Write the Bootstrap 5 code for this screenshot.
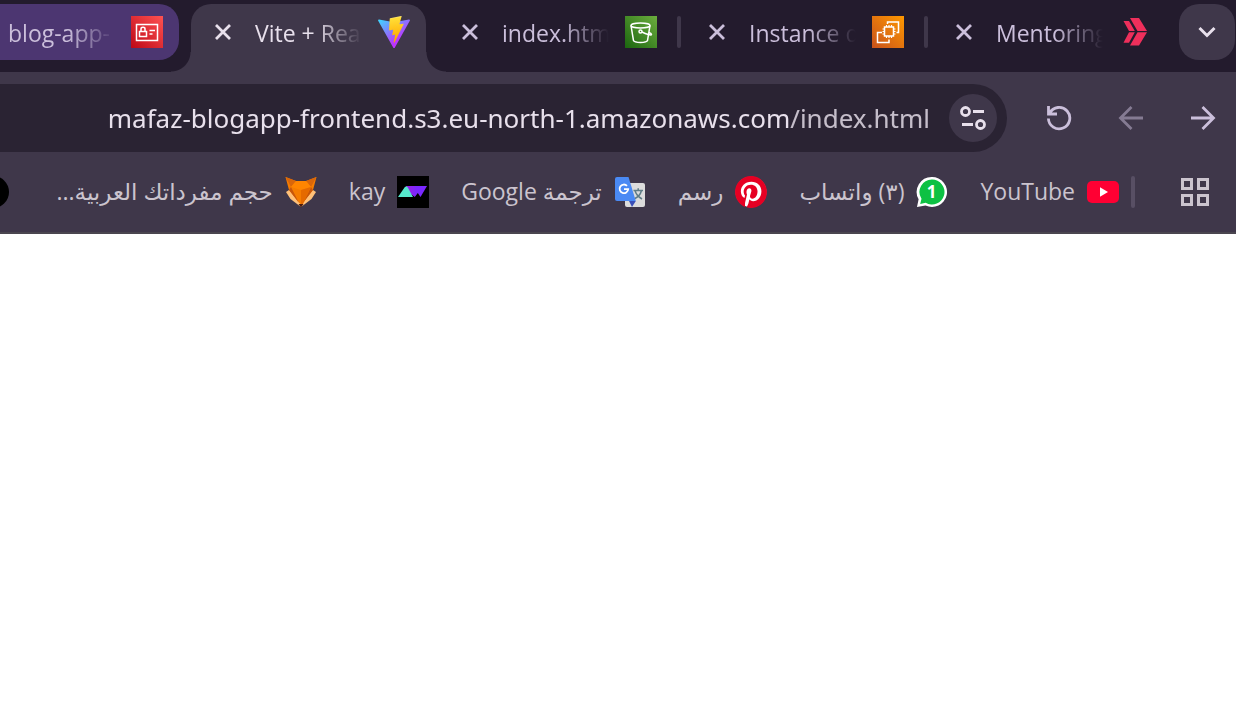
<!DOCTYPE html>
<html lang="ar" dir="rtl">
<head>
<meta charset="utf-8">
<meta name="viewport" content="width=device-width, initial-scale=1">
<title>Vite + React</title>
<link href="https://cdn.jsdelivr.net/npm/bootstrap@5.3.0/dist/css/bootstrap.min.css" rel="stylesheet">
<style>
  :root {
    --strip: #231b2d;
    --toolbar: #3f374a;
    --field: #2a2333;
    --group: #4c3671;
    --lilac: #cbbfdb;
    --light: #e8e0ec;
    --muted: #cbc4ce;
  }
  body { font-family: "Open Sans", "Noto Sans", "DejaVu Sans", sans-serif; background: #fff; }
  svg { display: block; flex: none; }
  .browser { background: var(--toolbar); border-bottom: 2px solid #4a464f; }
  .icon-btn { width: 56px; height: 56px; flex: none; color: var(--lilac); border: 0; background: none; padding: 0; }

  /* tab strip */
  .strip { background: var(--strip); height: 72px; padding: 4px 1px 0; gap: 4px; }
  .menu-btn { background: var(--toolbar); border-radius: 20px; color: var(--light); margin-left: 8px; }
  .tab { position: relative; width: 235px; height: 56px; flex: none; padding: 0 16px; gap: 16px; }
  .tab-title { flex: 1 1 0; min-width: 0; overflow: hidden; white-space: nowrap; direction: ltr; text-align: left;
    font-size: 23px; line-height: 32px; padding-top: 2px; color: var(--lilac); text-decoration: none;
    -webkit-mask-image: linear-gradient(to right, #000 calc(100% - 48px), transparent);
    mask-image: linear-gradient(to right, #000 calc(100% - 48px), transparent); }
  .close-btn { width: 32px; height: 32px; flex: none; border: 0; background: none; padding: 0; color: var(--lilac); }
  .tab-divider { width: 4px; height: 32px; margin-top: 12px; border-radius: 2px; background: var(--toolbar); flex: none; }
  .tab-divider.off { background: none; }
  .tab-grouped { background: var(--group); border-radius: 20px; }
  .tab-active { height: 68px; padding-bottom: 12px; background: var(--toolbar); border-radius: 20px 20px 0 0; }
  .tab-active .tab-title, .tab-active .close-btn { color: var(--light); }
  .tab-active::before, .tab-active::after { content: ""; position: absolute; bottom: 0; width: 20px; height: 20px; }
  .tab-active::before { right: -20px; background: radial-gradient(circle at 100% 0, transparent 19px, var(--toolbar) 20px); }
  .tab-active::after { left: -20px; background: radial-gradient(circle at 0 0, transparent 19px, var(--toolbar) 20px); }

  /* address row */
  .address-row { padding: 12px 5px 0 0; }
  .address { height: 68px; background: var(--field); border-radius: 0 34px 34px 0; padding-right: 10px; gap: 19px; margin-right: 24px; }
  .site-btn { width: 48px; height: 48px; flex: none; background: var(--toolbar); color: var(--light); border: 0; padding: 0; }
  .url { flex: 1 1 0; min-width: 0; border: 0; outline: 0; padding: 0; background: transparent; color: var(--light);
    direction: ltr; text-align: right; font-family: "Noto Sans", "Open Sans", sans-serif; font-size: 26px; line-height: 40px;
    -webkit-mask-image: linear-gradient(to right, #000 calc(100% - 141px), rgba(0,0,0,.82) 0);
    mask-image: linear-gradient(to right, #000 calc(100% - 141px), rgba(0,0,0,.82) 0); }

  /* bookmarks */
  .bookmarks { height: 80px; padding-right: 13px; }
  .mark-divider { width: 4px; height: 32px; border-radius: 2px; background: #584f64; margin: 0 32px 0 12px; flex: none; }
  .bookmark-list { gap: 32px; }
  .bookmark { gap: 12px; flex: none; color: var(--muted); text-decoration: none; white-space: nowrap; font-size: 23px; line-height: 32px; }
  .bookmark-title { padding-bottom: 2px; }
  .bookmark-title-full { width: 232px; }
  .dot { width: 32px; height: 32px; border-radius: 50%; background: #000; flex: none; }
</style>
</head>
<body>
<header class="browser overflow-hidden">
  <div class="strip d-flex align-items-start overflow-hidden" role="tablist">
    <button class="icon-btn menu-btn d-flex align-items-center justify-content-center" aria-label="Search tabs">
      <svg width="20" height="20" viewBox="0 0 20 20" fill="none" stroke="currentColor" stroke-width="3"><path d="M2.500 6 10 13.500 17.500 6"/></svg>
    </button>

    <div class="tab d-flex align-items-center" role="tab">
      <svg width="32" height="32" viewBox="0 0 32 32" fill="#ee2f5b"><path d="M11 2h9l8 13H18.500zM4.500 5h5.500l5.800 10H10zM10 16.300h5.800L10 26.800H4.500zM18.500 16.300H28l-8 13.200h-9z"/></svg>
      <a class="tab-title" href="#">Mentoring</a>
      <button class="close-btn d-flex align-items-center justify-content-center" aria-label="Close"><svg width="18" height="18" viewBox="0 0 18 18" stroke="currentColor" stroke-width="2.800"><path d="M2 2l14 14M16 2 2 16"/></svg></button>
    </div>
    <span class="tab-divider"></span>

    <div class="tab d-flex align-items-center" role="tab">
      <svg width="32" height="32" viewBox="0 0 32 32" fill="none" stroke="#fff" stroke-width="1.500">
        <defs><linearGradient id="ec2" x1="0" y1="1" x2="1" y2="0"><stop stop-color="#c8511b"/><stop offset="1" stop-color="#f90"/></linearGradient></defs>
        <path d="M0 0h32v32H0z" fill="url(#ec2)" stroke="none"/>
        <path d="M15.500 8V6H26.500V16.500H24.500M10 16.500H5.500V26.500H17V23.500"/>
        <path d="M12.500 11h9v9h-9z"/>
        <path stroke-width="1.200" d="M14.500 11V9M17 11V9M19.500 11V9M14.500 20v2M17 20v2M19.500 20v2M12.500 13h-2M12.500 15.500h-2M12.500 18h-2M21.500 13h2M21.500 15.500h2M21.500 18h2"/>
      </svg>
      <a class="tab-title" href="#">Instance d</a>
      <button class="close-btn d-flex align-items-center justify-content-center" aria-label="Close"><svg width="18" height="18" viewBox="0 0 18 18" stroke="currentColor" stroke-width="2.800"><path d="M2 2l14 14M16 2 2 16"/></svg></button>
    </div>
    <span class="tab-divider"></span>

    <div class="tab d-flex align-items-center" role="tab">
      <svg width="32" height="32" viewBox="0 0 32 32" fill="none" stroke="#fff" stroke-width="1.500">
        <defs><linearGradient id="s3" x1="0" y1="1" x2="1" y2="0"><stop stop-color="#1b660f"/><stop offset="1" stop-color="#6cae3e"/></linearGradient></defs>
        <path d="M0 0h32v32H0z" fill="url(#s3)" stroke="none"/>
        <ellipse cx="15.500" cy="9.500" rx="9.500" ry="2.500"/><path d="M6 9.500 8.500 24.500c1 2.600 13 2.600 14 0L25 9.500"/>
        <circle cx="15.500" cy="15.500" r="1.500"/><path d="M17 16c4 2 9.500 3.800 9.500 2.400 0-.6-1.500-1.400-2.500-1.900"/>
      </svg>
      <a class="tab-title" href="#">index.htm</a>
      <button class="close-btn d-flex align-items-center justify-content-center" aria-label="Close"><svg width="18" height="18" viewBox="0 0 18 18" stroke="currentColor" stroke-width="2.800"><path d="M2 2l14 14M16 2 2 16"/></svg></button>
    </div>
    <span class="tab-divider off"></span>

    <div class="tab tab-active d-flex align-items-center" role="tab" aria-selected="true">
      <svg width="32" height="32" viewBox="0 0 256 257">
        <defs>
          <linearGradient id="va" x1="-.8%" x2="57.600%" y1="7.600%" y2="78.400%"><stop stop-color="#41d1ff"/><stop offset="1" stop-color="#bd34fe"/></linearGradient>
          <linearGradient id="vb" x1="43.400%" x2="50.300%" y1="2.200%" y2="89%"><stop stop-color="#ffea83"/><stop offset=".083" stop-color="#ffdd35"/><stop offset="1" stop-color="#ffa800"/></linearGradient>
        </defs>
        <path fill="url(#va)" d="M255 38 134 254c-2.500 4.500-9 4.500-11.500 0L.9 38c-2.700-4.800 1.400-10.700 6.900-9.800l120.200 21.500c.8.100 1.600.1 2.300 0l117.900-21.500c5.400-1 9.600 4.900 6.800 9.800z"/>
        <path fill="url(#vb)" d="M185.400.1 96.400 17.500c-1.500.3-2.500 1.500-2.600 3l-5.500 92.500c-.1 2.200 1.900 3.900 4 3.400l24.800-5.700c2.300-.5 4.400 1.500 3.900 3.800l-7.300 36.100c-.5 2.400 1.800 4.500 4.100 3.800l15.300-4.700c2.400-.7 4.600 1.400 4.100 3.800l-11.700 56.600c-.7 3.500 4 5.500 6 2.500l1.300-2 72.500-144.600c1.200-2.400-.9-5.200-3.500-4.700l-25.500 4.900c-2.400.5-4.400-1.800-3.800-4.100L189.100 4.200c.7-2.300-1.300-4.500-3.700-4.100z"/>
      </svg>
      <a class="tab-title" href="#">Vite + Rea</a>
      <button class="close-btn d-flex align-items-center justify-content-center" aria-label="Close"><svg width="18" height="18" viewBox="0 0 18 18" stroke="currentColor" stroke-width="2.800"><path d="M2 2l14 14M16 2 2 16"/></svg></button>
    </div>
    <span class="tab-divider off"></span>

    <div class="tab tab-grouped d-flex align-items-center" role="tab">
      <svg width="32" height="32" viewBox="0 0 32 32" fill="none" stroke="#fff" stroke-width="1.500">
        <defs><linearGradient id="iam" x1="0" y1="1" x2="1" y2="0"><stop stop-color="#bd0816"/><stop offset="1" stop-color="#ff5252"/></linearGradient></defs>
        <path d="M0 0h32v32H0z" fill="url(#iam)" stroke="none"/>
        <path d="M5.500 8.500h21v16h-21zM8.500 15.500h7v5h-7zM10 15.500V13c0-2.200 4-2.200 4 0v2.500M18.500 14.500h5.500M18.500 18h3"/>
      </svg>
      <a class="tab-title" href="#">blog-app-</a>
      <button class="close-btn d-flex align-items-center justify-content-center" aria-label="Close"><svg width="18" height="18" viewBox="0 0 18 18" stroke="currentColor" stroke-width="2.800"><path d="M2 2l14 14M16 2 2 16"/></svg></button>
    </div>
  </div>

  <div class="address-row d-flex align-items-center">
    <div class="d-flex gap-3">
      <button class="icon-btn d-flex align-items-center justify-content-center" aria-label="Back"><svg width="26" height="26" viewBox="0 0 26 26" fill="none" stroke="currentColor" stroke-width="2.800"><path d="M1 13h22.500M12.500 2 23.500 13l-11 11"/></svg></button>
      <button class="icon-btn d-flex align-items-center justify-content-center opacity-50" aria-label="Forward" disabled><svg width="26" height="26" viewBox="0 0 26 26" fill="none" stroke="currentColor" stroke-width="2.800"><path d="M25 13H2.500M13.500 2 2.500 13l11 11"/></svg></button>
      <button class="icon-btn d-flex align-items-center justify-content-center" aria-label="Reload"><svg width="26" height="26" viewBox="0 0 26 26" fill="none" stroke="currentColor" stroke-width="2.800"><path d="M2.400 13.500A10.700 10.700 0 1 0 3.700 8M2.500 1v8H11"/></svg></button>
    </div>
    <div class="address d-flex align-items-center flex-grow-1">
      <button class="site-btn rounded-circle d-flex align-items-center justify-content-center" aria-label="Site information">
        <svg width="26" height="26" viewBox="0 0 26 26" fill="none" stroke="currentColor" stroke-width="2.800"><circle cx="5.500" cy="6.500" r="4"/><path d="M13 6.500h11M2 19.500h11"/><circle cx="20.500" cy="19.500" r="4"/></svg>
      </button>
      <input class="url" type="text" aria-label="Address" value="mafaz-blogapp-frontend.s3.eu-north-1.amazonaws.com/index.html">
    </div>
  </div>

  <nav class="bookmarks d-flex align-items-center" aria-label="Bookmarks">
    <button class="icon-btn d-flex align-items-center justify-content-center" aria-label="Apps"><svg width="28" height="28" viewBox="0 0 28 28" fill="none" stroke="#cbc4ce" stroke-width="3"><path d="M1.500 1.500h9v9h-9zM17.500 1.500h9v9h-9zM1.500 17.500h9v9h-9zM17.500 17.500h9v9h-9z"/></svg></button>
    <span class="mark-divider"></span>
    <div class="bookmark-list d-flex align-items-center">
      <a class="bookmark d-flex align-items-center" href="#">
        <svg width="32" height="32" viewBox="0 0 32 32"><rect y="5" width="32" height="22" rx="5" fill="#ff0033"/><path d="M13 11.200v9.600l8-4.800z" fill="#fff"/></svg>
        <span class="bookmark-title">YouTube</span>
      </a>
      <a class="bookmark d-flex align-items-center" href="#">
        <svg width="32" height="32" viewBox="0 0 32 32"><path d="M16 1a15 15 0 1 1-6.500 28.500L1 31l1.600-7.700A15 15 0 0 1 16 1z" fill="#fff"/><path d="M16 3.500a12.500 12.500 0 1 1-6.300 23.300L4.200 28l1.300-5.200A12.500 12.500 0 0 1 16 3.500z" fill="#0dc143"/><text x="15.500" y="21.500" text-anchor="middle" direction="ltr" font-size="17" font-weight="700" fill="#fff">1</text></svg>
        <span class="bookmark-title">(٣) واتساب</span>
      </a>
      <a class="bookmark d-flex align-items-center" href="#">
        <svg width="32" height="32" viewBox="0 0 24 24"><circle cx="12" cy="12" r="11.500" fill="#fff"/><path fill="#e60023" d="M12 0C5.400 0 0 5.400 0 12c0 5.100 3.200 9.400 7.600 11.200-.1-.9-.2-2.400 0-3.400l1.400-6s-.4-.7-.4-1.800c0-1.700 1-2.900 2.200-2.900 1 0 1.500.8 1.500 1.700 0 1-.7 2.600-1 4-.3 1.200.6 2.200 1.800 2.200 2.100 0 3.800-2.200 3.800-5.500 0-2.900-2.100-4.900-5-4.900-3.400 0-5.400 2.600-5.400 5.200 0 1 .4 2.100.9 2.700.1.100.1.200.1.300l-.3 1.400c-.1.200-.2.300-.4.200-1.500-.7-2.400-2.900-2.400-4.700 0-3.800 2.800-7.300 8-7.300 4.200 0 7.400 3 7.400 7 0 4.200-2.600 7.500-6.200 7.500-1.200 0-2.400-.6-2.800-1.400l-.7 2.900c-.3 1-1 2.300-1.500 3.100 1.100.4 2.300.5 3.400.5 6.600 0 12-5.400 12-12S18.600 0 12 0z"/></svg>
        <span class="bookmark-title">رسم</span>
      </a>
      <a class="bookmark d-flex align-items-center" href="#">
        <svg width="32" height="32" viewBox="0 0 32 32"><rect x="11" y="7" width="20" height="24" rx="2" fill="#dcdcdc"/><path d="M15 25h6.800L18 31z" fill="#3a4fb8"/><path d="M19.500 14.500h9.500M24.200 12.300v2.200M21 14.500c1 4 3.500 6.500 7 8.500M27.500 14.500c-1 4-4 7-7.500 8.500" fill="none" stroke="#5f7d86" stroke-width="1.500"/><path d="M3 1h11.500l7.300 24H3a2 2 0 0 1-2-2V3a2 2 0 0 1 2-2z" fill="#4a8af4"/><path d="M13 9.800a4.300 4.300 0 1 0 1.200 3.400H10" fill="none" stroke="#fff" stroke-width="1.800"/></svg>
        <span class="bookmark-title">ترجمة Google</span>
      </a>
      <a class="bookmark d-flex align-items-center" href="#">
        <svg width="32" height="32" viewBox="0 0 32 32"><defs><linearGradient id="kv" x1="0" x2="1"><stop stop-color="#a020e0"/><stop offset=".5" stop-color="#7a28ff"/></linearGradient></defs><path d="M0 0h32v32H0z"/><path d="M9 10h21l-6.500 11-2.700-4-3 4L10 15z" fill="url(#kv)"/><path d="M1 21 7.500 11.500c.8-1.200 2.500-1.200 3.300 0L16 21z" fill="#56e8cd"/></svg>
        <span class="bookmark-title">kay</span>
      </a>
      <a class="bookmark d-flex align-items-center" href="#">
        <svg width="32" height="32" viewBox="0 0 32 32"><path d="M1 16l6-4h18l6 4-4.500 7L16 31 5.500 23z" fill="#ffc078"/><path d="M.5 1 11 5h10L31.500 1 28 14 16 29 4 14z" fill="#f57c00"/><path d="M.5 1 11 5 6 11zM31.500 1 21 5l5 6z" fill="#d9660a"/><path d="M4 14l2-3 8 16zM28 14l-2-3-8 16z" fill="#c8560a"/><path d="M6 11 11 5h10l5 6-10 3z" fill="#ff8500"/><path d="M16 14l10-3-8 17h-2z" fill="#e56a00"/><path d="M13.500 28h5L16 31.500z" fill="#4a1c10"/></svg>
        <span class="bookmark-title bookmark-title-full">حجم مفرداتك العربية...</span>
      </a>
      <a class="bookmark d-flex align-items-center" href="#" aria-label="Bookmark"><span class="dot"></span></a>
    </div>
  </nav>
</header>
<main></main>
<script src="https://cdn.jsdelivr.net/npm/bootstrap@5.3.0/dist/js/bootstrap.bundle.min.js"></script>
</body>
</html>
